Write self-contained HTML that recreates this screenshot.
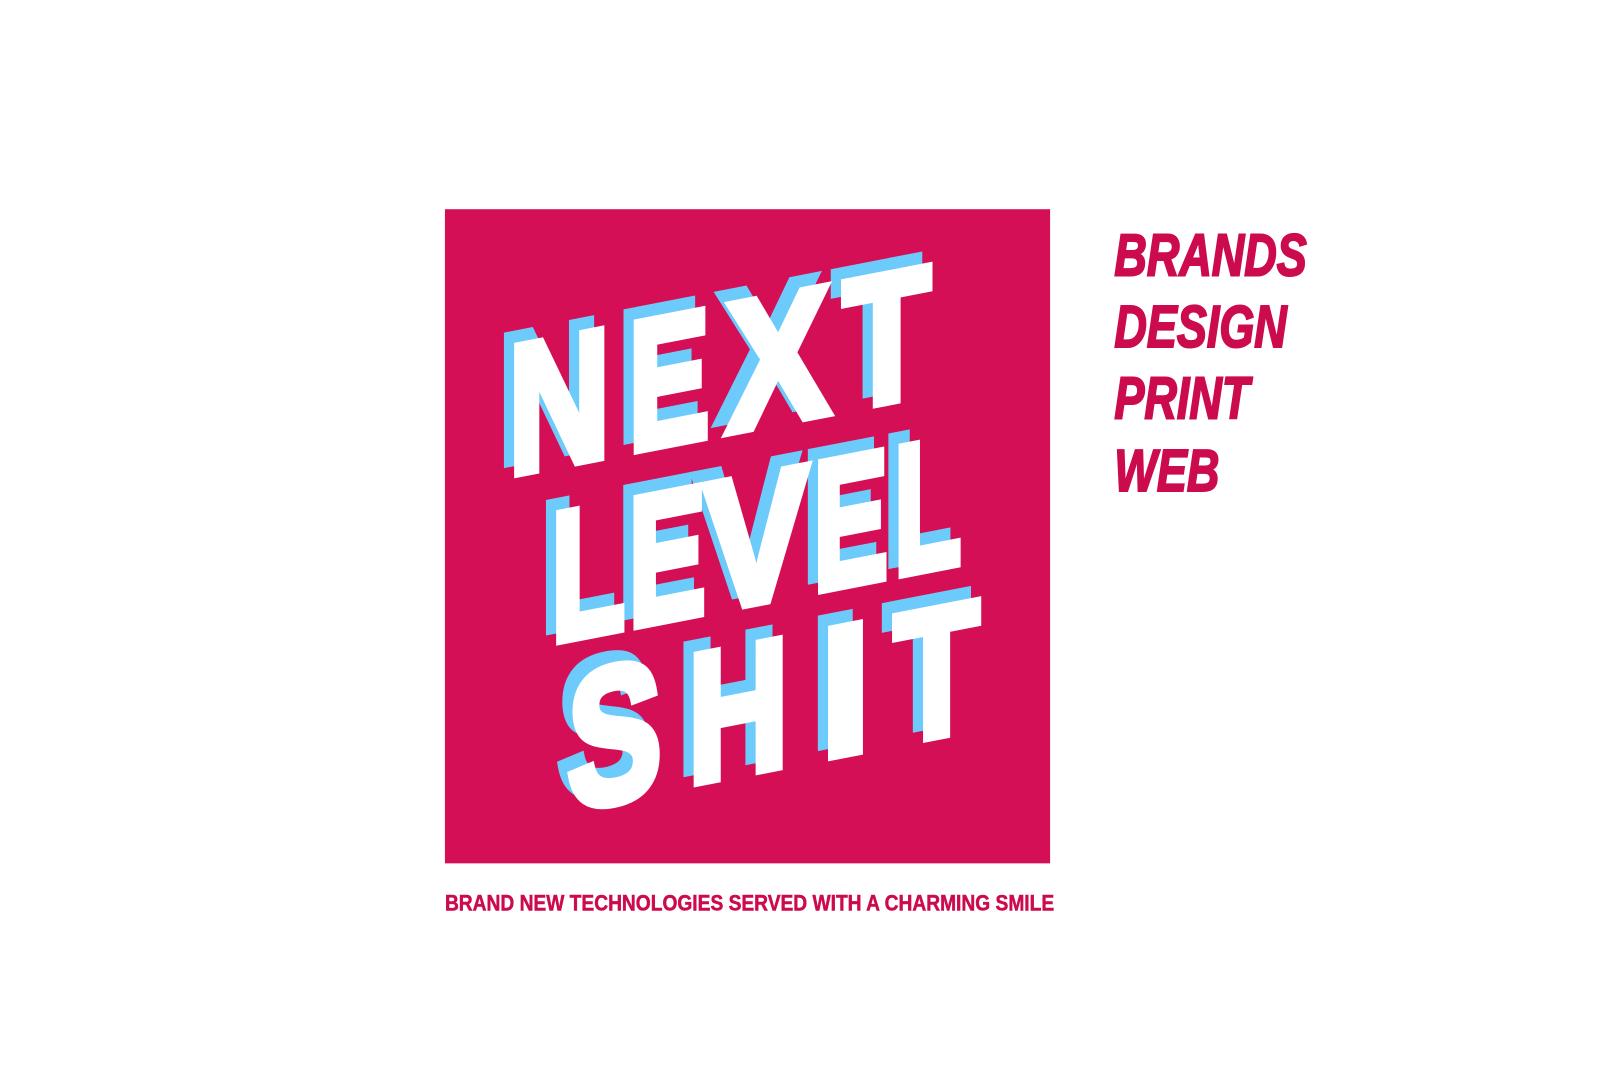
<!DOCTYPE html>
<html><head><meta charset="utf-8"><style>html,body{margin:0;padding:0;background:#fff;overflow:hidden}svg{display:block}</style></head>
<body>
<svg width="1600" height="1066" viewBox="0 0 1600 1066" xmlns="http://www.w3.org/2000/svg" font-family="'Liberation Sans', sans-serif" font-weight="bold">
<g transform="scale(1.0205)">
<rect x="436" y="205" width="593" height="641" fill="#D40F55"/>
<defs>
<g id="word">
 <g transform="matrix(1,-0.194,0,1,0,0)" font-size="180" stroke-width="9" stroke-linejoin="miter">
  <text transform="translate(498,562) scale(0.77,1)">N</text>
  <text transform="translate(616,562) scale(0.66,1)">E</text>
  <text transform="translate(712,562) scale(0.84,1)">X</text>
  <text transform="translate(826,562) scale(0.78,1)">T</text>

  <text transform="translate(540,734) scale(0.66,1)">L</text>
  <text transform="translate(616,734) scale(0.63,1)">E</text>
  <text transform="translate(690,734) scale(0.85,1)">V</text>
  <text transform="translate(797,734) scale(0.61,1)">E</text>
  <text transform="translate(876,734) scale(0.6,1)">L</text>

  <text transform="translate(556,902) scale(0.77,1.05)">S</text>
  <text transform="translate(674,899) scale(0.76,1)">H</text>
  <text transform="translate(804,899) scale(0.98,1)">I</text>
  <text transform="translate(876,899) scale(0.76,1)">T</text>
 </g>
</g>
</defs>
<use href="#word" transform="translate(-10,-10)" fill="#6CCBFA" stroke="#6CCBFA"/>
<use href="#word" fill="#FFFFFF" stroke="#FFFFFF"/>

<g fill="#CC0A4E" stroke="#CC0A4E" stroke-width="2" font-style="italic" font-size="58">
 <text transform="translate(1092,270) scale(0.76,1)">BRANDS</text>
 <text transform="translate(1092,340) scale(0.76,1)">DESIGN</text>
 <text transform="translate(1092,410) scale(0.76,1)">PRINT</text>
 <text transform="translate(1092,481) scale(0.76,1)">WEB</text>
</g>
<text x="436" y="892" font-size="22" fill="#CC0A4E" stroke="#CC0A4E" stroke-width="0.5" textLength="597" lengthAdjust="spacingAndGlyphs">BRAND NEW TECHNOLOGIES SERVED WITH A CHARMING SMILE</text>
</g>
</svg>
</body></html>
